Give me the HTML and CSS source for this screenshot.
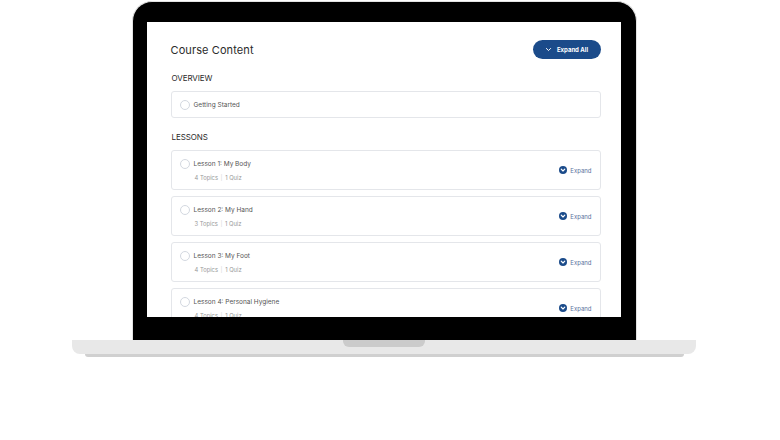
FILE: index.html
```html
<!DOCTYPE html>
<html>
<head>
    <title>Course Content</title>
    <link rel="stylesheet" href="styles.css">
</head>
<body>
    <div class="laptop">
        <div class="lid">
            <div class="screen">
                <div class="header">
                    <h1>Course Content</h1>
                    <button class="expand-all">
                        <svg width="7" height="7" viewBox="0 0 10 10"><path d="M2 3.5 L5 6.5 L8 3.5" fill="none" stroke="#fff" stroke-width="1.4" stroke-linecap="round" stroke-linejoin="round"/></svg>
                        Expand All
                    </button>
                </div>
                <h2>OVERVIEW</h2>
                <div class="item single">
                    <span class="check"></span>
                    <span class="title">Getting Started</span>
                </div>
                <h2>LESSONS</h2>
                <div class="item">
                    <div class="info">
                        <div class="row"><span class="check"></span><span class="title">Lesson 1: My Body</span></div>
                        <div class="meta">4 Topics <span class="sep">|</span> 1 Quiz</div>
                    </div>
                    <div class="expand"><span class="expand-icon"><svg width="8" height="8" viewBox="0 0 10 10"><circle cx="5" cy="5" r="5" fill="#1b4b8a"/><path d="M2.8 4 L5 6.2 L7.2 4" fill="none" stroke="#fff" stroke-width="1.5" stroke-linecap="round" stroke-linejoin="round"/></svg></span>Expand</div>
                </div>
                <div class="item">
                    <div class="info">
                        <div class="row"><span class="check"></span><span class="title">Lesson 2: My Hand</span></div>
                        <div class="meta">3 Topics <span class="sep">|</span> 1 Quiz</div>
                    </div>
                    <div class="expand"><span class="expand-icon"><svg width="8" height="8" viewBox="0 0 10 10"><circle cx="5" cy="5" r="5" fill="#1b4b8a"/><path d="M2.8 4 L5 6.2 L7.2 4" fill="none" stroke="#fff" stroke-width="1.5" stroke-linecap="round" stroke-linejoin="round"/></svg></span>Expand</div>
                </div>
                <div class="item">
                    <div class="info">
                        <div class="row"><span class="check"></span><span class="title">Lesson 3: My Foot</span></div>
                        <div class="meta">4 Topics <span class="sep">|</span> 1 Quiz</div>
                    </div>
                    <div class="expand"><span class="expand-icon"><svg width="8" height="8" viewBox="0 0 10 10"><circle cx="5" cy="5" r="5" fill="#1b4b8a"/><path d="M2.8 4 L5 6.2 L7.2 4" fill="none" stroke="#fff" stroke-width="1.5" stroke-linecap="round" stroke-linejoin="round"/></svg></span>Expand</div>
                </div>
                <div class="item">
                    <div class="info">
                        <div class="row"><span class="check"></span><span class="title">Lesson 4: Personal Hygiene</span></div>
                        <div class="meta">4 Topics <span class="sep">|</span> 1 Quiz</div>
                    </div>
                    <div class="expand"><span class="expand-icon"><svg width="8" height="8" viewBox="0 0 10 10"><circle cx="5" cy="5" r="5" fill="#1b4b8a"/><path d="M2.8 4 L5 6.2 L7.2 4" fill="none" stroke="#fff" stroke-width="1.5" stroke-linecap="round" stroke-linejoin="round"/></svg></span>Expand</div>
                </div>
            </div>
        </div>
        <div class="base">
            <div class="notch"></div>
        </div>
        <div class="base-shadow"></div>
    </div>
</body>
</html>
```
FILE: styles.css
```css
body {
    margin: 0;
    background: #fff;
    font-family: Inter, "Noto Sans", sans-serif;
    color: #333;
}
.laptop {
    width: 624px;
    margin-left: 72px;
    padding-top: 1px;
    display: flex;
    flex-direction: column;
    align-items: center;
}
.lid {
    width: 505px;
    height: 339px;
    box-sizing: border-box;
    background: #000;
    border: 1px solid #e2e2e2;
    border-bottom: none;
    border-radius: 20px 20px 0 0;
    padding: 20px 15px 23px 14px;
}
.screen {
    background: #fff;
    height: 100%;
    overflow: hidden;
    padding: 18px 20px 0 24px;
    box-sizing: border-box;
}
.header {
    display: flex;
    justify-content: space-between;
    align-items: center;
    height: 19px;
}
h1 {
    margin: 0;
    font-size: 11px;
    font-weight: 400;
    color: #2b2b2b;
    letter-spacing: 0.1px;
}
.expand-all {
    background: #1b4b8a;
    color: #fff;
    border: none;
    border-radius: 10px;
    width: 68px;
    height: 19px;
    font-family: Inter, sans-serif;
    font-size: 6px;
    font-weight: 700;
    display: flex;
    align-items: center;
    justify-content: center;
    gap: 5px;
    padding: 0;
}
h2 {
    margin: 14px 0 8px 1px;
    font-size: 8px;
    font-weight: 400;
    color: #2b2b2b;
    letter-spacing: -0.1px;
    line-height: 10px;
}
.item {
    border: 1px solid #e4e6ea;
    border-radius: 3px;
    height: 40px;
    box-sizing: border-box;
    margin-bottom: 6px;
    display: flex;
    align-items: center;
    justify-content: space-between;
    padding: 0 8px 0 8px;
}
.item.single {
    height: 27px;
    justify-content: flex-start;
    margin-bottom: 0;
}
.check {
    width: 8px;
    height: 8px;
    border: 1.4px solid #d3d8e0;
    border-radius: 50%;
    margin-right: 4px;
    flex-shrink: 0;
}
.title {
    font-size: 6.5px;
    color: #555;
}
.row {
    display: flex;
    align-items: center;
}
.info {
    margin-top: -1px;
}
.meta {
    font-size: 5.8px;
    color: #999;
    margin: 5px 0 0 15px;
}
.sep {
    color: #d5d5d5;
    margin: 0 1px;
}
.expand {
    display: flex;
    align-items: center;
    font-size: 6px;
    color: #5a73a0;
}
.expand-icon {
    display: flex;
    margin-right: 3px;
}
.base {
    width: 624px;
    height: 14px;
    background: #e8e8e8;
    border-radius: 0 0 8px 8px;
    display: flex;
    justify-content: center;
}
.notch {
    width: 82px;
    height: 7px;
    background: #cbcbcb;
    border-radius: 0 0 6px 6px;
}
.base-shadow {
    width: 599px;
    height: 3px;
    background: #d0d0d0;
    border-radius: 0 0 3px 3px;
}
```
